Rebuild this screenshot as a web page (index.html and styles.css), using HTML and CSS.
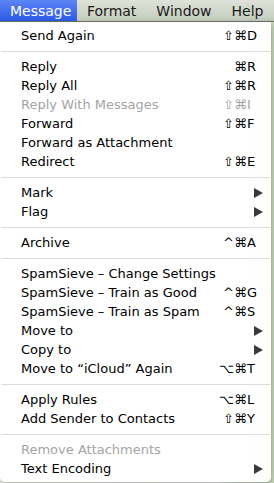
FILE: index.html
```html
<!DOCTYPE html>
<html lang="en">
<head>
  <meta charset="UTF-8" />
  <title>Message menu</title>
  <link rel="stylesheet" href="styles.css">
</head>
<body>
  <div class="menubar">
    <span class="title active">Message</span>
    <span class="title">Format</span>
    <span class="title">Window</span>
    <span class="title">Help</span>
  </div>
  <div class="menu">
    <div class="item"><span class="label">Send Again</span><span class="mods">⇧⌘</span><span class="key">D</span></div>
    <div class="sep"></div>
    <div class="item"><span class="label">Reply</span><span class="mods">⌘</span><span class="key">R</span></div>
    <div class="item"><span class="label">Reply All</span><span class="mods">⇧⌘</span><span class="key">R</span></div>
    <div class="item off"><span class="label">Reply With Messages</span><span class="mods">⇧⌘</span><span class="key">I</span></div>
    <div class="item"><span class="label">Forward</span><span class="mods">⇧⌘</span><span class="key">F</span></div>
    <div class="item"><span class="label">Forward as Attachment</span></div>
    <div class="item"><span class="label">Redirect</span><span class="mods">⇧⌘</span><span class="key">E</span></div>
    <div class="sep"></div>
    <div class="item"><span class="label">Mark</span><span class="arrow"></span></div>
    <div class="item"><span class="label">Flag</span><span class="arrow"></span></div>
    <div class="sep"></div>
    <div class="item"><span class="label">Archive</span><span class="mods">^⌘</span><span class="key">A</span></div>
    <div class="sep"></div>
    <div class="item"><span class="label">SpamSieve – Change Settings</span></div>
    <div class="item"><span class="label">SpamSieve – Train as Good</span><span class="mods">^⌘</span><span class="key">G</span></div>
    <div class="item"><span class="label">SpamSieve – Train as Spam</span><span class="mods">^⌘</span><span class="key">S</span></div>
    <div class="item"><span class="label">Move to</span><span class="arrow"></span></div>
    <div class="item"><span class="label">Copy to</span><span class="arrow"></span></div>
    <div class="item"><span class="label">Move to “iCloud” Again</span><span class="mods">⌥⌘</span><span class="key">T</span></div>
    <div class="sep"></div>
    <div class="item"><span class="label">Apply Rules</span><span class="mods">⌥⌘</span><span class="key">L</span></div>
    <div class="item"><span class="label">Add Sender to Contacts</span><span class="mods">⇧⌘</span><span class="key">Y</span></div>
    <div class="sep"></div>
    <div class="item off"><span class="label">Remove Attachments</span></div>
    <div class="item"><span class="label">Text Encoding</span><span class="arrow"></span></div>
  </div>
</body>
</html>
```

FILE: styles.css
```css
* { margin: 0; padding: 0; box-sizing: border-box; }
body {
  width: 274px;
  height: 483px;
  overflow: hidden;
  font-family: 'DejaVu Sans', sans-serif;
  font-size: 13px;
  color: #000;
  background: linear-gradient(to right, #f4f4f0 0%, #eef2e8 80%, #c8d8b8 100%);
}
.menubar {
  display: flex;
  height: 22px;
  align-items: stretch;
  background: linear-gradient(to bottom, #dfe3da, #c3ccbc);
  border-bottom: 1px solid #6f7468;
}
.title {
  display: flex;
  align-items: center;
  padding: 0 10px;
  font-size: 14px;
  color: #1a1a1a;
}
.title.active {
  width: 77px;
  color: #fff;
  background: linear-gradient(to bottom, #5d85f5, #2b59e6);
}
.menu {
  width: 271px;
  background: rgba(255, 255, 255, 0.97);
  padding: 4px 0 4px;
  border-radius: 0 0 5px 5px;
  box-shadow: 0 2px 6px rgba(0, 0, 0, 0.35);
}
.item {
  display: flex;
  align-items: center;
  height: 19px;
  padding: 0 9px 0 21px;
}
.item.off { color: #a4a4a4; }
.label { flex: 1; white-space: nowrap; }
.mods { text-align: right; }
.key { width: 15px; text-align: left; }
.arrow {
  width: 0;
  height: 0;
  margin-right: -1px;
  border-left: 9px solid #3a3a3a;
  border-top: 5px solid transparent;
  border-bottom: 5px solid transparent;
}
.sep {
  height: 1px;
  margin: 6px 1px 5px;
  background: #dcdcdc;
}
```
